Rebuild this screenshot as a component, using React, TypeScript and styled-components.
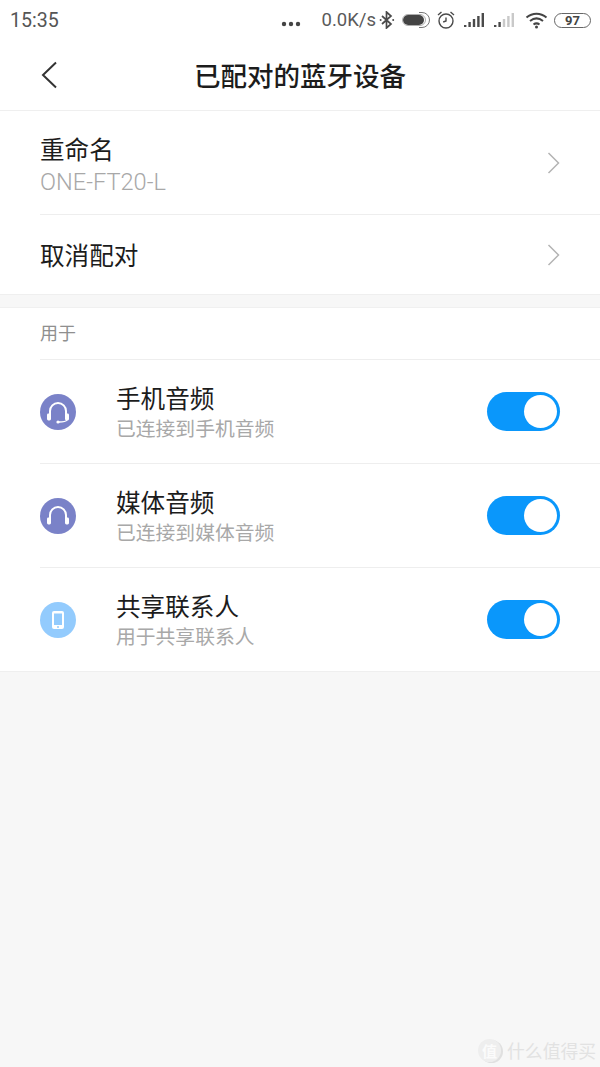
import React from 'react';
import styled, { createGlobalStyle } from 'styled-components';

const CJK = `"Noto Sans CJK SC", "Noto Sans", sans-serif`;

const GlobalStyle = createGlobalStyle`
  html, body {
    margin: 0;
    padding: 0;
    background: #f7f7f7;
  }
  * {
    box-sizing: border-box;
  }
`;

const Page = styled.div`
  position: relative;
  width: 600px;
  height: 1067px;
  overflow: hidden;
  background: #f7f7f7;
  font-family: ${CJK};
  color: #1a1a1a;
`;

/* ------------------------------- Status bar ------------------------------- */
const StatusBar = styled.div`
  height: 40px;
  padding: 0 9px 0 10px;
  display: flex;
  align-items: center;
  justify-content: space-between;
  background: #fff;
  color: #555;
`;

const Clock = styled.span`
  font-family: 'Roboto', sans-serif;
  font-size: 19.6px;
  color: #555;
`;

const StatusIcons = styled.div`
  display: flex;
  align-items: center;
`;

const Speed = styled.span`
  font-family: 'Roboto', sans-serif;
  font-size: 18.5px;
  color: #5a5a5a;
  margin: 0 3px 0 21px;
`;

const Battery = styled.span`
  width: 37px;
  height: 15px;
  margin-left: 6px;
  border: 1.5px solid #666;
  border-radius: 8px;
  display: flex;
  align-items: center;
  justify-content: center;
  font-family: 'Roboto', sans-serif;
  font-size: 13px;
  font-weight: 700;
  line-height: 1;
  color: #444;
`;

/* --------------------------------- Header --------------------------------- */
const Header = styled.header`
  height: 71px;
  padding: 0 40px;
  display: grid;
  grid-template-columns: 40px 1fr 40px;
  align-items: center;
  background: #fff;
  border-bottom: 1px solid #efefef;
`;

const Title = styled.h1`
  margin: 0;
  text-align: center;
  font-size: 26.5px;
  font-weight: 500;
  line-height: 1;
  color: #1c1c1c;
`;

/* ---------------------------------- List ---------------------------------- */
const Section = styled.section`
  background: #fff;
  border-bottom: 1px solid #efefef;
`;

const SecondSection = styled(Section)`
  margin-top: 12px;
  border-top: 1px solid #f0f0f0;
`;

const Row = styled.div<{ $height: number; $divider?: boolean }>`
  height: ${(p) => p.$height}px;
  margin-left: 40px;
  padding-right: 40px;
  display: flex;
  align-items: center;
  border-bottom: ${(p) => (p.$divider ? '1px solid #eeeeee' : 'none')};
`;

const SectionLabel = styled.div`
  height: 52px;
  margin-left: 40px;
  padding-bottom: 3px;
  display: flex;
  align-items: center;
  border-bottom: 1px solid #eeeeee;
  font-size: 18px;
  color: #8f8f8f;
`;

const RowText = styled.div`
  flex: 1;
  display: flex;
  flex-direction: column;
`;

const RowTitle = styled.div<{ $single?: boolean }>`
  margin-bottom: ${(p) => (p.$single ? 2 : 0)}px;
  font-size: 24.6px;
  line-height: 32px;
  color: #1c1c1c;
`;

const RowSub = styled.div<{ $latin?: boolean }>`
  margin: ${(p) => (p.$latin ? '2px 0 -4px' : '-1px 0 -1px')};
  font-family: ${(p) => (p.$latin ? `'Roboto', sans-serif` : CJK)};
  font-size: ${(p) => (p.$latin ? 23.6 : 19.8)}px;
  font-weight: ${(p) => (p.$latin ? 300 : 400)};
  line-height: 32px;
  color: #a8a8a8;
`;

const IconSlot = styled.div`
  width: 76px;
  flex: none;
  display: flex;
  align-items: center;
`;

const Toggle = styled.div`
  width: 73px;
  height: 39px;
  padding: 3px;
  flex: none;
  display: flex;
  justify-content: flex-end;
  border-radius: 20px;
  background: #0a97fb;
`;

const ToggleKnob = styled.div`
  width: 33px;
  height: 33px;
  border-radius: 50%;
  background: #fff;
`;

/* ------------------------------- Watermark -------------------------------- */
const Watermark = styled.div`
  position: absolute;
  right: 4px;
  bottom: 5px;
  display: flex;
  align-items: center;
  gap: 6px;
  color: #e2e2e2;
  font-size: 17.8px;
  line-height: 1;
`;

const WatermarkBadge = styled.span`
  width: 23px;
  height: 23px;
  display: flex;
  align-items: center;
  justify-content: center;
  border-radius: 50%;
  background: #eeeeee;
  box-shadow: 2px 1px 0 #e0e0e0;
  color: #fbfbfb;
  font-size: 15px;
  font-weight: 700;
`;

/* ---------------------------------- Icons --------------------------------- */
const Dots = () => (
  <svg width="20" height="16" viewBox="0 0 20 16" style={{ marginTop: 8 }}>
    <circle cx="3" cy="8" r="2.2" fill="#444" />
    <circle cx="10" cy="8" r="2.2" fill="#444" />
    <circle cx="17" cy="8" r="2.2" fill="#444" />
  </svg>
);

const BluetoothIcon = () => (
  <svg width="16" height="18" viewBox="0 0 16 18" fill="none" stroke="#4a4a4a" strokeWidth="1.7">
    <path d="M3 5l9 8-4.5 4V1L12 5l-9 8" />
    <circle cx="1.6" cy="9" r="1" fill="#4a4a4a" stroke="none" />
    <circle cx="14.2" cy="9" r="1" fill="#4a4a4a" stroke="none" />
  </svg>
);

const HeadsetPill = () => (
  <svg width="28" height="20" viewBox="0 0 28 20" style={{ marginLeft: 7 }}>
    <rect x="1" y="5" width="21" height="10" rx="5" fill="#444" />
    <path d="M17 2.5h3a7.5 7.5 0 0 1 0 15h-3" fill="none" stroke="#777" strokeWidth="1" />
    <rect x="0.5" y="4.5" width="23" height="11" rx="5.5" fill="none" stroke="#999" strokeWidth="0.8" />
  </svg>
);

const AlarmIcon = () => (
  <svg width="20" height="20" viewBox="0 0 20 20" fill="none" stroke="#4a4a4a" strokeWidth="1.4" style={{ marginLeft: 6 }}>
    <circle cx="10" cy="11" r="7" />
    <path d="M10 7.5V11l-2.8 1M2 5l3.5-3M18 5l-3.5-3" />
  </svg>
);

const SignalIcon = ({ level }: { level: number }) => (
  <svg width="23" height="16" viewBox="0 0 23 16" style={{ marginLeft: 7 }}>
    {[0, 1, 2, 3, 4].map((i) => (
      <rect
        key={i}
        x={1 + i * 4.4}
        y={13 - i * 3}
        width="2.4"
        height={2 + i * 3}
        fill={i < level ? '#4a4a4a' : '#c9c9c9'}
      />
    ))}
  </svg>
);

const WifiIcon = () => (
  <svg width="23" height="17" viewBox="0 0 22 17" fill="none" stroke="#444" strokeWidth="2" style={{ marginLeft: 9 }}>
    <path d="M1 5.5c6-5 14-5 20 0" />
    <path d="M4.5 9c4-3.2 9-3.2 13 0" />
    <path d="M8 12.5c2-1.5 4-1.5 6 0" />
    <circle cx="11" cy="15" r="1.5" fill="#444" stroke="none" />
  </svg>
);

const BackIcon = () => (
  <svg width="18" height="28" viewBox="0 0 18 28" fill="none" stroke="#333" strokeWidth="2">
    <path d="M16 1.5L3 14l13 12.5" />
  </svg>
);

const Chevron = () => (
  <svg width="13" height="22" viewBox="0 0 13 22" fill="none" stroke="#b4b4b4" strokeWidth="1.5">
    <path d="M1.5 1l10 10-10 10" />
  </svg>
);

const HeadphoneIcon = ({ mic }: { mic?: boolean }) => (
  <svg width="36" height="36" viewBox="0 0 36 36">
    <circle cx="18" cy="18" r="18" fill="#7a82c8" />
    <path d="M10 21v-4a8 8 0 0 1 16 0v4" fill="none" stroke="#fff" strokeWidth="2" />
    <rect x="7" y="19.5" width="4" height="7" rx="1.4" fill="#fff" />
    <rect x="25" y="19.5" width="4" height="7" rx="1.4" fill="#fff" />
    {mic && (
      <>
        <path d="M27 26c-1 1.6-4 2-8 2" fill="none" stroke="#fff" strokeWidth="1.4" />
        <circle cx="18" cy="28" r="1.6" fill="#fff" />
      </>
    )}
  </svg>
);

const PhoneIcon = () => (
  <svg width="36" height="36" viewBox="0 0 36 36">
    <circle cx="18" cy="18" r="18" fill="#93cbfd" />
    <rect x="12" y="9" width="12" height="18" rx="2" fill="#fff" />
    <rect x="14" y="11.5" width="8" height="11.5" fill="#93cbfd" />
    <circle cx="18" cy="25" r="1" fill="#93cbfd" />
  </svg>
);

const profiles = [
  { title: '手机音频', sub: '已连接到手机音频', icon: <HeadphoneIcon mic /> },
  { title: '媒体音频', sub: '已连接到媒体音频', icon: <HeadphoneIcon /> },
  { title: '共享联系人', sub: '用于共享联系人', icon: <PhoneIcon /> },
];

const App = () => {
  return (
    <Page>
      <GlobalStyle />
      <StatusBar>
        <Clock>15:35</Clock>
        <StatusIcons>
          <Dots />
          <Speed>0.0K/s</Speed>
          <BluetoothIcon />
          <HeadsetPill />
          <AlarmIcon />
          <SignalIcon level={5} />
          <SignalIcon level={2} />
          <WifiIcon />
          <Battery>97</Battery>
        </StatusIcons>
      </StatusBar>

      <Header>
        <BackIcon />
        <Title>已配对的蓝牙设备</Title>
      </Header>

      <Section>
        <Row $height={104} $divider>
          <RowText>
            <RowTitle>重命名</RowTitle>
            <RowSub $latin>ONE-FT20-L</RowSub>
          </RowText>
          <Chevron />
        </Row>
        <Row $height={79}>
          <RowText>
            <RowTitle $single>取消配对</RowTitle>
          </RowText>
          <Chevron />
        </Row>
      </Section>

      <SecondSection>
        <SectionLabel>用于</SectionLabel>
        {profiles.map((item, i) => {
          const last = i === profiles.length - 1;
          return (
            <Row key={item.title} $height={last ? 103 : 104} $divider={!last}>
              <IconSlot>{item.icon}</IconSlot>
              <RowText>
                <RowTitle>{item.title}</RowTitle>
                <RowSub>{item.sub}</RowSub>
              </RowText>
              <Toggle>
                <ToggleKnob />
              </Toggle>
            </Row>
          );
        })}
      </SecondSection>

      <Watermark>
        <WatermarkBadge>值</WatermarkBadge>
        什么值得买
      </Watermark>
    </Page>
  );
};

export default App;
